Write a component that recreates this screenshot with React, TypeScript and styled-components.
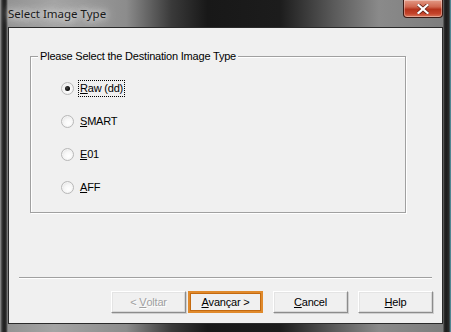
import React from "react";
import styled, { createGlobalStyle } from "styled-components";

const Global = createGlobalStyle`
  html, body { margin: 0; padding: 0; background: #fff; }
  body { width: 451px; height: 332px; overflow: hidden; }
`;

const Win = styled.div`
  width: 451px;
  height: 332px;
  box-sizing: border-box;
  display: flex;
  flex-direction: column;
  background:
    linear-gradient(90deg, #9a9a9a 0px, #3a3a3a 2px, #1e1e1e 4px, #2c2c2c 6px, transparent 8px),
    linear-gradient(270deg, #5fa3b4 0px, #2a2a2a 2px, #1a1a1a 5px, #303030 7px, transparent 8px),
    linear-gradient(90deg, #909090 0%, #a4a4a4 12%, #8c8c8c 28%, #3a3a3a 38%, #181818 46%, #1c1c1c 62%, #5a5a5a 74%, #8a8a8a 84%, #7c7c7c 100%);
  font-family: "Liberation Sans", Arial, sans-serif;
`;

const TitleBar = styled.div`
  height: 27px;
  flex: none;
  display: flex;
  align-items: flex-start;
  justify-content: space-between;
  padding-left: 8px;
  padding-right: 8px;
  box-sizing: border-box;
`;

const Title = styled.span`
  font-family: "Noto Sans", "Segoe UI", sans-serif;
  font-size: 11.5px;
  line-height: 16px;
  margin-top: 6px;
  color: #1a1a1a;
  text-shadow: 0 0 6px #e8e8e8, 0 0 10px #dcdcdc, 0 0 14px #d0d0d0;
`;

const CloseBtn = styled.div`
  width: 40px;
  height: 18px;
  box-sizing: border-box;
  border: 1px solid #3a1a14;
  border-top: none;
  border-radius: 0 0 4px 4px;
  background: linear-gradient(180deg, #e39a86 0%, #d0674f 40%, #b5331b 55%, #c4432a 80%, #d9785c 100%);
  box-shadow: inset 0 0 0 1px rgba(255, 255, 255, 0.35);
  display: flex;
  align-items: center;
  justify-content: center;
`;

const Client = styled.div`
  flex: 1;
  margin: 0 8px 8px 8px;
  background: #f0f0f0;
  border: 1px solid #2a2a2a;
  box-sizing: border-box;
  display: flex;
  flex-direction: column;
  padding: 28px 9px 0 21px;
  font-size: 11px;
  letter-spacing: -0.2px;
  color: #000;
`;

const Group = styled.div`
  position: relative;
  width: 376px;
  height: 157px;
  box-sizing: border-box;
  border: 1px solid #a0a0a0;
  box-shadow: 1px 1px 0 #fff, inset 1px 1px 0 #fff;
  display: flex;
  flex-direction: column;
  padding: 23px 0 0 30px;
  gap: 17px;
`;

const Legend = styled.span`
  position: absolute;
  left: 7px;
  top: -7px;
  padding: 0 2px;
  background: #f0f0f0;
  line-height: 13px;
  white-space: nowrap;
`;

const RadioRow = styled.div`
  display: flex;
  align-items: center;
  height: 16px;
  gap: 4px;
`;

const RadioCircle = styled.span<{ $checked?: boolean }>`
  width: 11px;
  height: 11px;
  border-radius: 50%;
  border: 1px solid #b8b8b8;
  background: radial-gradient(circle at 60% 65%, #ffffff 0%, #f6f6f6 45%, #d8d8d8 100%);
  box-shadow: inset 0 0 0 1px #f4f4f4;
  display: flex;
  align-items: center;
  justify-content: center;
  &::after {
    content: "";
    display: ${(p) => (p.$checked ? "block" : "none")};
    width: 5px;
    height: 5px;
    border-radius: 50%;
    background: radial-gradient(circle at 40% 40%, #444 0%, #000 70%);
  }
`;

const RadioLabel = styled.span<{ $focus?: boolean }>`
  line-height: 13px;
  padding: 1px 1px;
  border: 1px dotted ${(p) => (p.$focus ? "#000" : "transparent")};
`;

const Spacer = styled.div`
  flex: 1;
`;

const Separator = styled.div`
  margin-left: -11px;
  margin-right: 1px;
  height: 1px;
  background: #a0a0a0;
  border-bottom: 1px solid #fff;
`;

const ButtonRow = styled.div`
  display: flex;
  justify-content: flex-end;
  gap: 10px;
  margin-top: 12px;
  margin-bottom: 10px;
`;

const Button = styled.div<{ $default?: boolean; $disabled?: boolean; $tight?: boolean }>`
  width: 75px;
  height: 22px;
  box-sizing: border-box;
  display: flex;
  align-items: center;
  justify-content: center;
  background: #f0f0f0;
  margin-right: ${(p) => (p.$tight ? "-8px" : "0")};
  color: ${(p) => (p.$disabled ? "#a0a0a0" : "#000")};
  ${(p) =>
    p.$default
      ? `border: 2px solid #e08a2c; box-shadow: inset 0 0 0 1px #c46a10;`
      : `border-top: 1px solid #fff; border-left: 1px solid #fff; border-right: 1px solid #8c8c8c; border-bottom: 1px solid #8c8c8c; box-shadow: 1px 1px 0 #d0d0d0, inset -1px -1px 0 #d8d8d8, inset 1px 1px 0 #e4e4e4;`}
  ${(p) => (p.$disabled ? "text-shadow: 1px 1px 0 #fff;" : "")}
`;

const U = styled.span`
  text-decoration: underline;
`;

const options: { key: string; rest: string; checked?: boolean }[] = [
  { key: "R", rest: "aw (dd)", checked: true },
  { key: "S", rest: "MART" },
  { key: "E", rest: "01" },
  { key: "A", rest: "FF" },
];

export default function App() {
  return (
    <>
      <Global />
      <Win>
        <TitleBar>
          <Title>Select Image Type</Title>
          <CloseBtn>
            <svg width="12" height="10" viewBox="0 0 12 10">
              <path
                d="M1.5 1 L10.5 9 M10.5 1 L1.5 9"
                stroke="#5a1a10"
                strokeWidth="3.6"
                strokeLinecap="square"
              />
              <path
                d="M1.5 1 L10.5 9 M10.5 1 L1.5 9"
                stroke="#ffffff"
                strokeWidth="2.2"
                strokeLinecap="square"
              />
            </svg>
          </CloseBtn>
        </TitleBar>
        <Client>
          <Group>
            <Legend>Please Select the Destination Image Type</Legend>
            {options.map((o) => (
              <RadioRow key={o.key}>
                <RadioCircle $checked={o.checked} />
                <RadioLabel $focus={o.checked}>
                  <U>{o.key}</U>
                  {o.rest}
                </RadioLabel>
              </RadioRow>
            ))}
          </Group>
          <Spacer />
          <Separator />
          <ButtonRow>
            <Button $disabled $tight>
              &lt;&nbsp;<U>V</U>oltar
            </Button>
            <Button $default>
              <U>A</U>vançar &gt;
            </Button>
            <Button>
              <U>C</U>ancel
            </Button>
            <Button>
              <U>H</U>elp
            </Button>
          </ButtonRow>
        </Client>
      </Win>
    </>
  );
}
